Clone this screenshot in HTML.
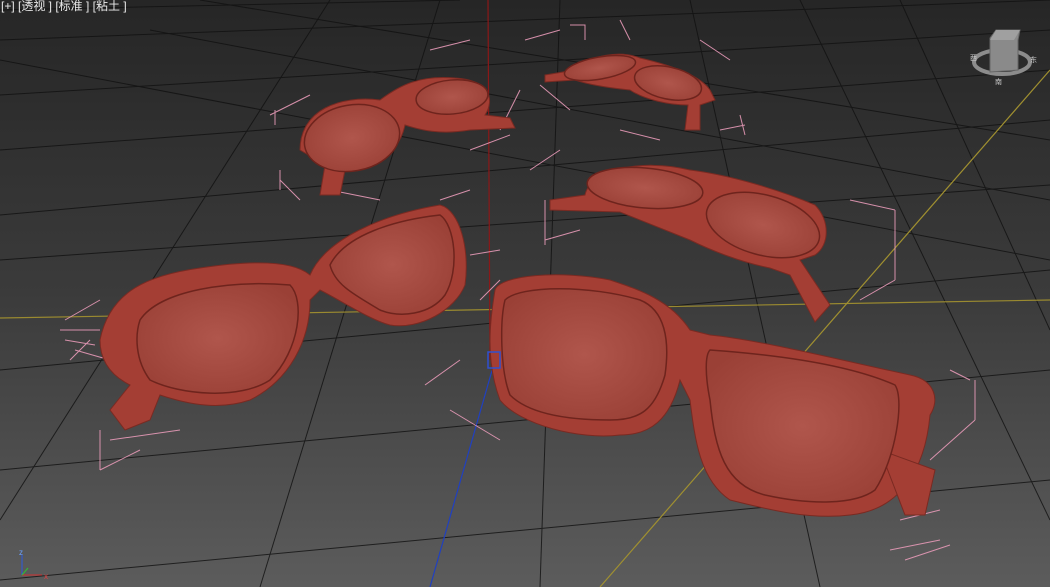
<!DOCTYPE html>
<html><head><meta charset="utf-8"><style>
html,body{margin:0;padding:0;width:1050px;height:587px;overflow:hidden;background:#3a3a3a}
svg{display:block}
.t{position:absolute;left:1px;top:-3px;color:#e8e8e8;font:12px "Liberation Sans","Noto Sans CJK SC",sans-serif;white-space:pre}
</style></head><body>
<svg width="1050" height="587" viewBox="0 0 1050 587">
<defs>
<linearGradient id="bg" x1="0" y1="0" x2="0" y2="1">
<stop offset="0" stop-color="#262626"/><stop offset="0.5" stop-color="#3b3b3b"/><stop offset="1" stop-color="#5c5c5c"/></linearGradient>
<radialGradient id="lens" cx="0.5" cy="0.5" r="0.6"><stop offset="0" stop-color="#b0564c"/><stop offset="1" stop-color="#9a4036"/></radialGradient>
</defs>
<rect width="1050" height="587" fill="url(#bg)"/>
<g stroke="#111" stroke-width="1" fill="none" opacity="0.8">
<path d="M0 40 L1050 0"/><path d="M0 95 L1050 30"/><path d="M0 150 L1050 70"/><path d="M0 215 L1050 120"/>
<path d="M0 260 L1050 185"/><path d="M0 370 L1050 270"/><path d="M0 470 L1050 370"/><path d="M0 580 L1050 480"/>
<path d="M0 10 L460 0"/><path d="M150 30 L1050 200"/><path d="M0 60 L1050 260"/><path d="M200 0 L1050 140"/>
<path d="M540 587 L560 0"/><path d="M260 587 L440 0"/><path d="M0 520 L330 0"/><path d="M820 587 L690 0"/><path d="M1050 520 L800 0"/><path d="M1050 330 L900 0"/>
</g>
<path d="M0 318 L1050 300" stroke="#9a8a30" stroke-width="1.2"/>
<path d="M600 587 L1050 70" stroke="#a09030" stroke-width="1.2"/>
<path d="M488 0 L490 360" stroke="#8a1818" stroke-width="1.2"/>
<path d="M430 587 L495 360" stroke="#2040c0" stroke-width="1.2"/>
<g stroke="#e89ab8" stroke-width="1" fill="none" opacity="0.9">
<path d="M65 320 L100 300 M70 360 L90 340 M100 470 L140 450 M110 440 L180 430 M60 330 L100 330 M75 350 L110 360 M65 340 L95 345"/>
<path d="M270 115 L310 95 M280 180 L300 200 M430 50 L470 40 M500 130 L520 90 M470 150 L510 135 M275 125 L275 110 M280 190 L280 170"/>
<path d="M525 40 L560 30 M540 85 L570 110 M700 40 L730 60 M720 130 L745 125 M620 20 L630 40 M570 25 L585 25 L585 40 M740 115 L745 135"/>
<path d="M530 170 L560 150 M545 240 L580 230 M850 200 L895 210 M860 300 L895 280 M620 130 L660 140 M895 210 L895 280 M545 200 L545 245"/>
<path d="M425 385 L460 360 M450 410 L500 440 M890 550 L940 540 M930 460 L975 420 M950 370 L970 380 M900 520 L940 510 M975 380 L975 420 M905 560 L950 545 M100 430 L100 470"/>
<path d="M440 200 L470 190 M330 190 L380 200 M470 255 L500 250 M480 300 L500 280"/>
</g>
<g fill="#a43e34" stroke="#7a2a22" stroke-width="1">
<path d="M300 150 C300 110 340 95 380 100 C400 85 420 75 455 78 C490 80 495 100 485 115 L510 118 L515 128 L470 130 C440 135 420 130 405 125 C400 150 380 165 345 170 L340 195 L320 195 L325 165 Z"/>
<path d="M545 75 L575 70 C590 55 620 50 640 58 C670 65 700 75 710 90 L715 100 L700 105 L700 130 L685 130 L688 105 C670 105 645 100 630 90 C610 88 590 85 575 80 L545 82 Z"/>
<path d="M550 200 L585 195 C590 170 640 158 690 170 C730 175 780 190 815 205 C830 220 830 245 815 255 L800 260 L830 305 L815 322 L790 275 L770 268 C740 262 710 250 690 240 C660 228 640 220 620 212 L550 210 Z"/>
<path d="M100 340 C110 290 150 275 200 268 C240 262 290 258 310 275 C325 240 380 215 440 205 C460 210 470 250 465 285 C455 310 420 330 390 325 C370 320 340 300 320 290 L310 300 C310 340 290 380 250 400 C220 410 190 405 160 395 L150 420 L125 430 L110 410 L130 385 C110 375 100 360 100 340 Z"/>
<path d="M495 290 C500 275 560 270 610 280 C640 290 670 300 690 330 L710 335 C760 340 840 360 910 375 C935 380 940 400 930 415 C925 470 900 510 850 515 C810 520 770 510 730 500 C700 480 695 440 690 400 L680 380 C670 420 650 435 620 435 C580 440 520 425 500 400 C485 360 490 320 495 290 Z"/>
<path d="M880 450 L935 470 L925 515 L905 515 Z"/>
</g>
<g fill="url(#lens)" stroke="#6e241d" stroke-width="1.5">
<ellipse cx="352" cy="138" rx="48" ry="33" transform="rotate(-10 352 138)"/>
<ellipse cx="452" cy="97" rx="36" ry="17" transform="rotate(-5 452 97)"/>
<ellipse cx="600" cy="68" rx="36" ry="11" transform="rotate(-10 600 68)"/>
<ellipse cx="668" cy="83" rx="34" ry="16" transform="rotate(12 668 83)"/>
<ellipse cx="645" cy="188" rx="58" ry="20" transform="rotate(5 645 188)"/>
<ellipse cx="763" cy="225" rx="58" ry="30" transform="rotate(15 763 225)"/>
<path d="M140 320 C160 290 230 280 290 285 C305 300 300 350 270 380 C240 400 180 395 150 380 C135 360 135 335 140 320 Z"/>
<path d="M330 265 C345 235 395 220 440 215 C455 225 460 270 445 295 C430 315 400 318 380 310 C355 295 335 285 330 265 Z"/>
<path d="M505 300 C520 285 590 285 640 300 C665 310 670 340 665 375 C655 410 640 420 610 420 C570 420 530 415 510 395 C500 370 500 320 505 300 Z"/>
<path d="M710 350 C780 355 850 365 895 385 C905 400 895 460 875 490 C855 505 810 505 765 495 C725 485 715 450 710 400 C705 375 705 355 710 350 Z"/>
</g>
<rect x="488" y="352" width="12" height="16" fill="none" stroke="#3050d0" stroke-width="1.5"/>
<ellipse cx="1002" cy="62" rx="28" ry="12" fill="none" stroke="#8c8c8c" stroke-width="4"/>
<path d="M990 38 L996 30 L1020 30 L1018 40 L1018 70 L990 72 Z" fill="#8a8a8a" stroke="#666"/>
<path d="M996 30 L1020 30 L1014 40 L990 40 Z" fill="#a0a0a0"/>
<text x="970" y="60" font-size="7" fill="#ccc" font-family="Liberation Sans, Noto Sans CJK SC, sans-serif">西</text>
<text x="1030" y="62" font-size="7" fill="#ccc" font-family="Liberation Sans, Noto Sans CJK SC, sans-serif">东</text>
<text x="995" y="84" font-size="7" fill="#ccc" font-family="Liberation Sans, Noto Sans CJK SC, sans-serif">南</text>
<path d="M22 575 L22 555" stroke="#2a5ae0" stroke-width="1"/>
<text x="19" y="555" font-size="8" fill="#6aa0ff" font-family="Liberation Sans">z</text>
<text x="44" y="579" font-size="8" fill="#e04040" font-family="Liberation Sans">x</text>
<path d="M22 575 L42 575" stroke="#d03030"/>
<path d="M22 575 L28 568" stroke="#30c030"/>
</svg>
<div class="t">[+] [透视 ] [标准 ] [粘土 ]</div>
</body></html>
